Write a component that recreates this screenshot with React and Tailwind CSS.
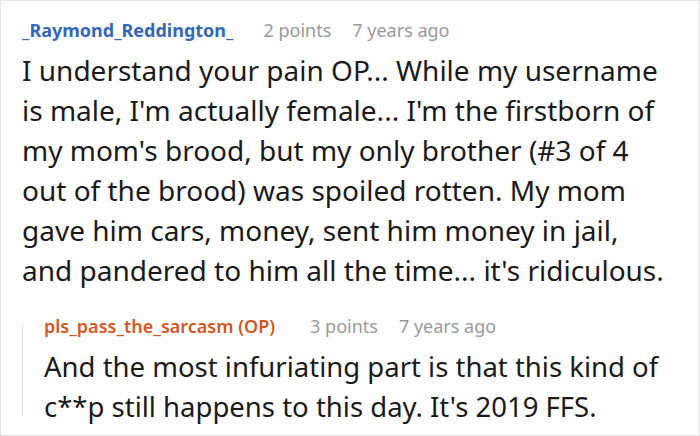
import React from 'react'

const font = { fontFamily: '"Noto Sans", "Open Sans", sans-serif' }

function Meta({ points, when, gap }) {
  return (
    <>
      <span className={`${gap} text-[#999]`}>{points}</span>
      <span className="ml-[21px] text-[#999]">{when}</span>
    </>
  )
}

export default function App() {
  return (
    <div
      className="w-[700px] h-[436px] bg-white border border-[#e3e3e3] overflow-hidden"
      style={font}
    >
      {/* Parent comment */}
      <div className="pl-[21px] pt-[16px]">
        <div className="text-[18px] leading-[26px] flex items-center">
          <span className="font-bold text-[#3567b8]">_Raymond_Reddington_</span>
          <Meta points="2 points" when="7 years ago" gap="ml-[30px]" />
        </div>
        <p className="mt-[7px] text-[28px] leading-[40px] text-[#1a1a1a] whitespace-nowrap">
          I understand your pain OP... While my username
          <br />
          is male, I'm actually female... I'm the firstborn of
          <br />
          my mom's brood, but my only brother (#3 of 4
          <br />
          out of the brood) was spoiled rotten. My mom
          <br />
          gave him cars, money, sent him money in jail,
          <br />
          and pandered to him all the time... it's ridiculous.
        </p>
      </div>

      {/* Reply */}
      <div className="ml-[21px] mt-[23px] flex">
        <div className="w-px bg-[#dedede] mt-[12px] mb-[11px] shrink-0" />
        <div className="pl-[21px]">
          <div className="text-[18px] leading-[26px] flex items-center">
            <span className="font-semibold text-[#d5561f]">pls_pass_the_sarcasm (OP)</span>
            <Meta points="3 points" when="7 years ago" gap="ml-[35px]" />
          </div>
          <p className="mt-[8px] text-[27.5px] leading-[40px] text-[#1a1a1a] whitespace-nowrap">
            And the most infuriating part is that this kind of
            <br />
            c**p still happens to this day. It's 2019 FFS.
          </p>
        </div>
      </div>
    </div>
  )
}
